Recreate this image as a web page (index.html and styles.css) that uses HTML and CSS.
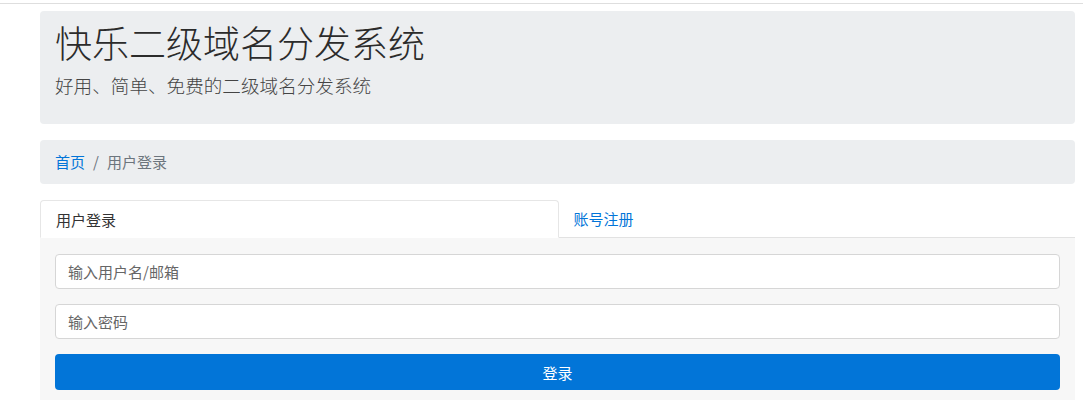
FILE: index.html
```html
<!DOCTYPE html>
<html lang="zh-CN">
<head>
    <meta charset="UTF-8">
    <meta name="viewport" content="width=device-width, initial-scale=1.0">
    <title>快乐二级域名分发系统</title>
    <link rel="stylesheet" href="styles.css">
</head>
<body>
    <div class="topbar"></div>
    <div class="container">
        <div class="jumbotron">
            <h1 class="title">快乐二级域名分发系统</h1>
            <p class="lead">好用、简单、免费的二级域名分发系统</p>
        </div>
        <ol class="breadcrumb">
            <li><a href="#">首页</a></li>
            <li class="sep">/</li>
            <li class="current">用户登录</li>
        </ol>
        <ul class="tabs">
            <li class="tab active">用户登录</li>
            <li class="tab"><a href="#">账号注册</a></li>
        </ul>
        <div class="tab-content">
            <form class="login-form" onsubmit="return false">
                <input type="text" class="form-control" placeholder="输入用户名/邮箱">
                <input type="password" class="form-control" placeholder="输入密码">
                <button type="submit" class="btn-primary">登录</button>
            </form>
        </div>
    </div>
</body>
</html>
```

FILE: styles.css
```css
body {
    margin: 0;
    font-family: "Noto Sans CJK SC", "Noto Sans", sans-serif;
    color: #333;
    background-color: #fff;
}
a {
    color: #0275d8;
    text-decoration: none;
}
.topbar {
    width: 1083px;
    height: 3px;
    border-bottom: 1px solid #dedede;
}
.container {
    width: 1035px;
    margin: 7px 0 0 40px;
}
.jumbotron {
    background-color: #eceef0;
    border-radius: 4px;
    height: 113px;
    padding: 8px 15px 0;
    box-sizing: border-box;
}
.title {
    margin: 0;
    font-size: 37px;
    font-weight: 300;
    line-height: 46px;
    color: #2b2b2b;
}
.lead {
    margin: 6px 0 0;
    font-size: 18.6px;
    font-weight: 300;
    line-height: 28px;
    color: #444;
}
.breadcrumb {
    list-style: none;
    margin: 16px 0 0;
    padding: 11px 15px;
    display: flex;
    gap: 8px;
    background-color: #eceef0;
    border-radius: 4px;
    font-size: 15px;
    line-height: 22px;
}
.breadcrumb .sep,
.breadcrumb .current {
    color: #6c757d;
}
.tabs {
    list-style: none;
    margin: 16px 0 0;
    padding: 0;
    display: flex;
}
.tab {
    flex: 1;
    height: 38px;
    box-sizing: border-box;
    padding: 0 15px;
    font-size: 15px;
    line-height: 37px;
    border-bottom: 1px solid #e2e2e2;
}
.tab.active {
    border: 1px solid #e6e6e6;
    border-bottom-color: transparent;
    border-radius: 4px 4px 0 0;
    background-color: #fff;
    color: #333;
}
.tab-content {
    background-color: #f7f7f7;
    padding: 16px 15px 10px;
}
.login-form {
    display: flex;
    flex-direction: column;
    gap: 15px;
}
.form-control {
    height: 35px;
    box-sizing: border-box;
    padding: 0 12px;
    border: 1px solid #d6d6d6;
    border-radius: 4px;
    background-color: #fff;
    font-family: inherit;
    font-size: 15px;
    color: #333;
}
.form-control::placeholder {
    color: #666;
}
.btn-primary {
    height: 36px;
    border: none;
    border-radius: 4px;
    background-color: #0275d8;
    color: #fff;
    font-family: inherit;
    font-size: 15px;
    cursor: pointer;
}
```
